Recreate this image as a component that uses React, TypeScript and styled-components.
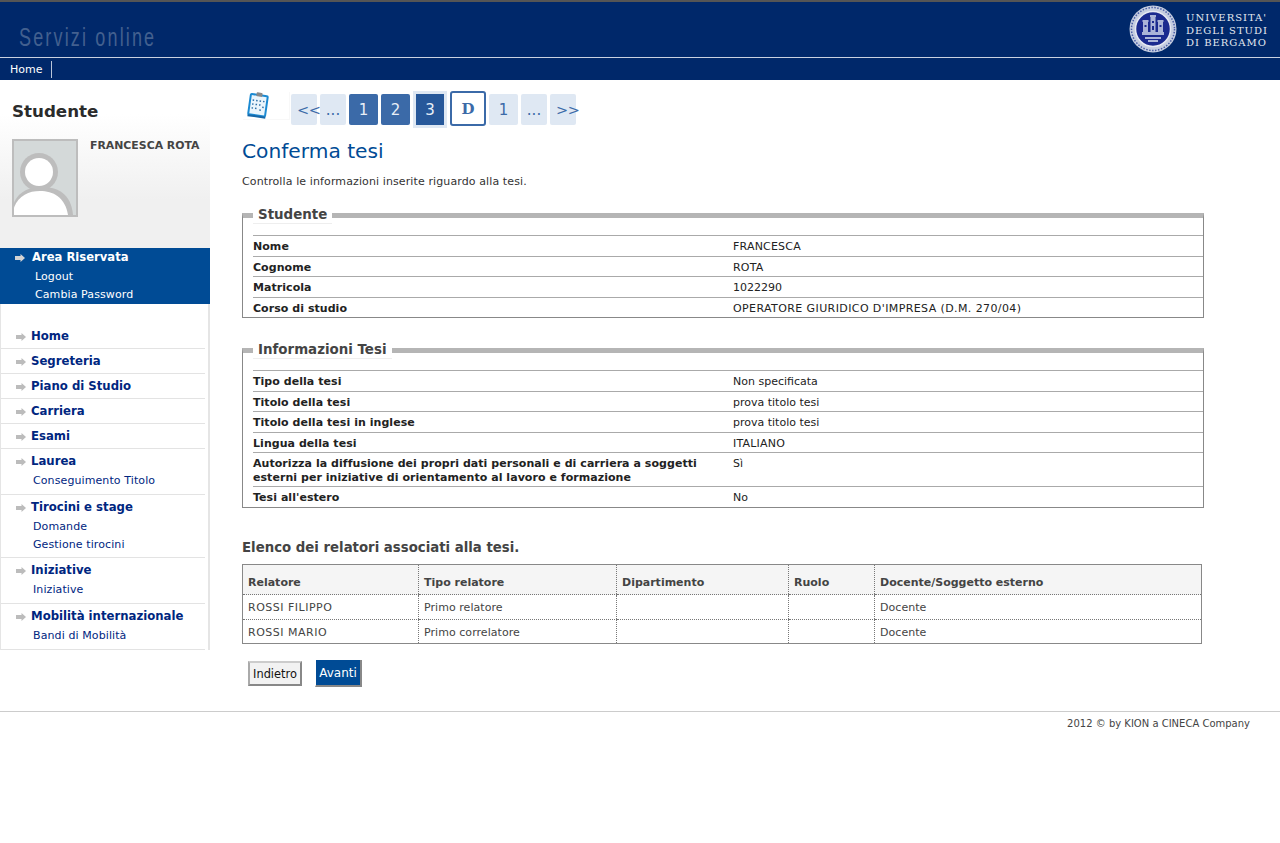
import React from "react";
import styled, { createGlobalStyle } from "styled-components";

const Global = createGlobalStyle`
  html, body { margin: 0; padding: 0; background: #fff; }
  body { font-family: "DejaVu Sans", Verdana, sans-serif; font-size: 11px; color: #222; }
`;
const Page = styled.div`width: 1280px; height: 843px; overflow: hidden; background: #fff;`;
const Header = styled.header`
  height: 57px; box-sizing: border-box; background: #00286a; border-top: 2px solid #555;
  display: flex; justify-content: space-between; align-items: flex-start;
`;
const Brand = styled.div`
  margin: 20px 0 0 19px; font-family: "Liberation Sans", sans-serif; transform: scaleX(.72); transform-origin: left center;
  font-size: 25px; line-height: 30px; letter-spacing: 3px; color: #43608f; white-space: nowrap;
`;
const Uni = styled.div`display: flex; align-items: flex-start; gap: 9px; margin: 3px 12px 0 0;`;
const UniText = styled.div`
  font-family: "DejaVu Serif", serif; font-size: 10px; line-height: 12.5px; letter-spacing: 1px; color: #e4e8f0; white-space: nowrap; margin-top: 7px;
`;
const Nav = styled.nav`
  height: 22px; background: #00286a; border-top: 1px solid #c9d1e0; display: flex; align-items: center;
`;
const NavItem = styled.a`
  color: #fff; font-size: 11px; height: 17px; line-height: 18px; padding: 0 9px 0 10px; border-right: 1px solid #b9c5d9;
`;
const Body = styled.div`display: grid; grid-template-columns: 210px 1fr; height: 631px; border-bottom: 1px solid #ccc;`;
const Side = styled.aside`width: 210px;`;
const Profile = styled.div`
  height: 168px; box-sizing: border-box; background: linear-gradient(#fff 0, #fff 34px, #f0f0f0 120px);
  padding: 20px 0 0 12px;
`;
const SideTitle = styled.h2`margin: 0 0 17px; font-size: 16.7px; line-height: 22px; font-weight: bold; color: #2b2b2b;`;
const ProfileRow = styled.div`display: flex; align-items: flex-start; gap: 12px;`;
const Avatar = styled.div`
  width: 66px; height: 78px; box-sizing: border-box; border: 2px solid #bdbdbd; background: #d4d9d9; overflow: hidden; display: flex;
`;
const StudentName = styled.div`font-size: 10.9px; line-height: 14px; font-weight: bold; color: #444; white-space: nowrap;`;
const Reserved = styled.div`background: #004b95; height: 56px; box-sizing: border-box;`;
const Arrow = styled.span<{ $light?: boolean }>`
  display: inline-block; width: 10px; height: 8px; margin: 0 6px 0 0; flex: none; background: ${(p) => (p.$light ? "#d3d3d3" : "#bcbcbc")};
  clip-path: polygon(0 25%, 55% 25%, 55% 0, 100% 50%, 55% 100%, 55% 75%, 0 75%);
`;
const ReservedTitle = styled.div`
  display: flex; align-items: center; padding-left: 15px; height: 17px; color: #fff; font-weight: bold; font-size: 11.6px; white-space: nowrap;
  ${Arrow} { margin-right: 7px; margin-top: 3px; }
`;
const ReservedLink = styled.a`
  display: block; color: #fff; padding-left: 35px; line-height: 18px; font-size: 11px; letter-spacing: .1px;
  &:first-of-type { margin-top: 3px; }
`;
const Menu = styled.div`
  box-sizing: border-box; height: 346px; padding-top: 20px; border-left: 1px solid #e5e5e5; border-right: 2px solid #e5e5e5;
`;
const Group = styled.div<{ $pad: number }>`
  border-bottom: 1px solid #e3e3e3; margin-right: 3px; padding-bottom: ${(p) => p.$pad}px;
`;
const GroupTitle = styled.a`
  display: flex; align-items: center; height: 24px; box-sizing: border-box; padding-left: 15px; color: #00267f; font-weight: bold; font-size: 11.7px; white-space: nowrap;
  ${Arrow} { margin-top: 2px; margin-right: 5px; }
`;
const SubLink = styled.a`
  display: block; color: #00267f; padding-left: 32px; font-size: 11px; line-height: 18px; letter-spacing: .1px;
  ${GroupTitle} + & { margin-top: -1px; }
`;
const Main = styled.main`padding: 11px 76px 0 32px;`;
const Steps = styled.div`display: flex; align-items: flex-start; height: 40px;`;
const StepIcon = styled.div`
  width: 47px; height: 28px; flex: none; padding-left: 4px; box-sizing: border-box; margin-right: 2px;
  box-shadow: 1px 1px 0 #f8f8f8;
`;
const StepList = styled.div`display: flex; gap: 3px; align-items: flex-start; margin-top: 3px;`;
const Step = styled.span<{ $w: number; $kind?: "done" | "now" | "d" | "edge" }>`
  display: flex; align-items: center; justify-content: center; box-sizing: border-box; border-radius: 2px;
  width: ${(p) => p.$w}px; height: 31px; font-size: 15px; white-space: nowrap;
  background: ${(p) => (p.$kind === "done" ? "#3b6aa8" : p.$kind === "now" ? "#27589a" : p.$kind === "d" ? "#fff" : "#dfe8f3")};
  color: ${(p) => (p.$kind === "done" || p.$kind === "now" ? "#e9eff7" : "#3b6aa8")};
  ${(p) => p.$kind === "edge" && "justify-content: flex-start; padding-left: 6px; letter-spacing: -.5px; font-size: 14.5px;"}
  ${(p) => p.$kind === "now" && "outline: 3px solid #dfe8f3; margin: 0 3px; border-radius: 0;"}
  ${(p) => p.$kind === "d" && `border: 2px solid #3b6aa8; border-radius: 3px; height: 35px; margin-top: -3px; font: bold 15px "DejaVu Serif", serif;`}
`;
const Title = styled.h1`margin: 7px 0 0; font-weight: normal; font-size: 20.2px; line-height: 26px; color: #004b95;`;
const Intro = styled.p`margin: 11px 0 0; font-size: 11px; line-height: 14px; color: #333; letter-spacing: .11px;`;
const Field = styled.fieldset<{ $h: number; $top: number }>`
  margin: ${(p) => p.$top}px 0 0; padding: 0 0 0 10px; height: ${(p) => p.$h}px; box-sizing: border-box; min-width: 0;
  border: 1px solid #888; border-top: 5px solid #b5b5b5; width: 962px;
`;
const Legend = styled.legend`
  margin-left: 0; padding: 0 5px 1px; font-size: 13.4px; line-height: 15px; font-weight: bold; color: #444; background: #fff; border-bottom: 1px solid #eee;
`;
const Row = styled.div<{ $h?: number }>`
  display: grid; grid-template-columns: 480px 1fr; border-top: 1px solid #aaa; align-items: start; padding-top: 4px; box-sizing: border-box;
  min-height: ${(p) => p.$h ?? 20.6}px; height: ${(p) => p.$h ?? 20.6}px; line-height: 14px;
`;
const RowsWrap = styled.div`padding-top: 11px;`;
const Label = styled.div`font-weight: bold; color: #222; width: 465px; letter-spacing: .05px;`;
const Val = styled.div<{ $track?: number }>`color: #222; letter-spacing: ${(p) => p.$track ?? 0}px;`;
const SubTitle = styled.h3`margin: 32px 0 0; font-size: 13.3px; line-height: 16px; font-weight: bold; color: #444;`;
const Table = styled.table`
  margin-top: 8px; width: 959px; height: 80px; border: 1px solid #888; border-collapse: collapse; table-layout: fixed; color: #444;
  tr:last-child td { height: 24px; padding-top: 1px; }
`;
const Th = styled.th<{ $w?: number }>`
  text-align: left; font-size: 11px; font-weight: bold; background: #f5f5f5; padding: 6px 5px 0; height: 30px; box-sizing: border-box;
  border-left: 1px dotted #777; border-bottom: 1px dotted #777; ${(p) => p.$w && `width: ${p.$w}px;`}
`;
const Td = styled.td<{ $caps?: boolean }>`
  font-size: 11px; padding: 0 5px; height: 25px; box-sizing: border-box; border-left: 1px dotted #777; border-bottom: 1px dotted #777;
  letter-spacing: ${(p) => (p.$caps ? ".5px" : ".05px")};
`;
const Buttons = styled.div`display: flex; align-items: flex-start; gap: 13px; margin: 17px 0 0 6px;`;
const Back = styled.button`
  width: 54px; height: 25px; padding: 0; box-sizing: border-box; background: #f2f2f2; border: 2px solid; border-color: #ccc #888 #888 #aaa; color: #111;
  font: 11.4px "DejaVu Sans", sans-serif;
`;
const Next = styled.button`
  width: 47px; height: 27px; margin-top: -1px; padding: 0; box-sizing: border-box; background: #004b95; border: solid; border-width: 0 2px 2px 1px; border-color: #fff #888 #888 #fff; color: #fff;
  font: 12px "DejaVu Sans", sans-serif;
`;
const Footer = styled.footer`
  text-align: right; padding: 5px 30px 0 0; font-size: 10px; line-height: 14px; color: #444;
`;

const Clip = () => (
  <svg width="24" height="28" viewBox="0 0 24 28">
    <g transform="rotate(8 12 14)">
      <rect x="3.5" y="4" width="17" height="20.5" rx="1" fill="#eaf5fc" stroke="#1b8ad2" strokeWidth="2" />
      <path d="M3 24.5 h18 v2 h-18z" fill="#1467a8" />
      <rect x="9" y="1.5" width="6" height="4" rx="1" fill="#888" />
      <g fill="#2b6ea6">
        <rect x="6" y="9" width="1.5" height="1.5" /><rect x="9.5" y="9" width="1.5" height="1.5" /><rect x="13" y="9" width="1.5" height="1.5" /><rect x="16.5" y="9" width="1.5" height="1.5" />
        <rect x="6" y="13" width="1.5" height="1.5" /><rect x="9.5" y="13" width="1.5" height="1.5" /><rect x="13" y="13" width="1.5" height="1.5" />
        <rect x="6" y="17" width="1.5" height="1.5" /><rect x="9.5" y="17" width="1.5" height="1.5" /><rect x="14" y="18" width="1.5" height="1.5" /><rect x="16.5" y="15" width="1.5" height="1.5" />
      </g>
    </g>
  </svg>
);
const Person = () => (
  <svg width="62" height="74" viewBox="0 0 62 74">
    <path d="M0 74 C2 52 16 46 31 46 C46 46 60 52 62 74 Z" fill="#bdbdbd" transform="translate(-3 0)" />
    <path d="M3 74 C6 56 18 50 31 50 C44 50 56 56 59 74 Z" fill="#fff" transform="translate(-5 0)" />
    <circle cx="25" cy="31" r="19" fill="#bdbdbd" />
    <circle cx="25" cy="31" r="14" fill="#fff" />
  </svg>
);
const Seal = () => (
  <svg width="48" height="48" viewBox="0 0 48 48">
    <circle cx="24" cy="24" r="23.5" fill="#c5cde0" />
    <circle cx="24" cy="24" r="21.5" fill="none" stroke="#4a5ea6" strokeWidth="1.5" strokeDasharray="1.5 1.5" />
    <circle cx="24" cy="24" r="17.5" fill="#1a2a8f" stroke="#e5e8f2" strokeWidth="1.5" />
    <g fill="#aab4d8">
      <rect x="14" y="17" width="5" height="13" /><rect x="21.5" y="12" width="5" height="18" /><rect x="29" y="17" width="5" height="13" />
      <rect x="13.5" y="15" width="6" height="2" /><rect x="21" y="10" width="6" height="2" /><rect x="28.5" y="15" width="6" height="2" />
      <rect x="13" y="27" width="22" height="3" /><rect x="16" y="32" width="16" height="2" /><rect x="19" y="35" width="10" height="2" />
    </g>
    <g fill="#1a2a8f"><rect x="15.5" y="20" width="2" height="2" /><rect x="23" y="16" width="2" height="2" /><rect x="30.5" y="20" width="2" height="2" /><rect x="23" y="21" width="2" height="4" /></g>
  </svg>
);

type Item = { t: string; subs?: string[] };
const menu: Item[] = [
  { t: "Home" }, { t: "Segreteria" }, { t: "Piano di Studio" }, { t: "Carriera" }, { t: "Esami" },
  { t: "Laurea", subs: ["Conseguimento Titolo"] },
  { t: "Tirocini e stage", subs: ["Domande", "Gestione tirocini"] },
  { t: "Iniziative", subs: ["Iniziative"] },
  { t: "Mobilità internazionale", subs: ["Bandi di Mobilità"] },
];
const student: [string, string, number?][] = [["Nome", "FRANCESCA", 0.2], ["Cognome", "ROTA", 0.2], ["Matricola", "1022290"], ["Corso di studio", "OPERATORE GIURIDICO D'IMPRESA (D.M. 270/04)", 0.4]];
const thesis: [string, string, number?][] = [
  ["Tipo della tesi", "Non specificata"], ["Titolo della tesi", "prova titolo tesi"], ["Titolo della tesi in inglese", "prova titolo tesi"],
  ["Lingua della tesi", "ITALIANO"],
  ["Autorizza la diffusione dei propri dati personali e di carriera a soggetti esterni per iniziative di orientamento al lavoro e formazione", "Sì", 34],
  ["Tesi all'estero", "No"],
];
const cols: [string, number][] = [["Relatore", 176], ["Tipo relatore", 198], ["Dipartimento", 172], ["Ruolo", 86], ["Docente/Soggetto esterno", 327]];
const rel = [["ROSSI FILIPPO", "Primo relatore", "", "", "Docente"], ["ROSSI MARIO", "Primo correlatore", "", "", "Docente"]];

export default function App() {
  return (
    <Page>
      <Global />
      <Header>
        <Brand>Servizi online</Brand>
        <Uni>
          <Seal />
          <UniText>UNIVERSITA'<br />DEGLI STUDI<br />DI BERGAMO</UniText>
        </Uni>
      </Header>
      <Nav><NavItem>Home</NavItem></Nav>
      <Body>
        <Side>
          <Profile>
            <SideTitle>Studente</SideTitle>
            <ProfileRow>
              <Avatar><Person /></Avatar>
              <StudentName>FRANCESCA ROTA</StudentName>
            </ProfileRow>
          </Profile>
          <Reserved>
            <ReservedTitle><Arrow $light />Area Riservata</ReservedTitle>
            <ReservedLink>Logout</ReservedLink>
            <ReservedLink>Cambia Password</ReservedLink>
          </Reserved>
          <Menu>
            {menu.map((m) => (
              <Group key={m.t} $pad={!m.subs ? 0 : m.subs.length === 2 ? 3 : 4}>
                <GroupTitle><Arrow />{m.t}</GroupTitle>
                {m.subs?.map((s) => <SubLink key={s}>{s}</SubLink>)}
              </Group>
            ))}
          </Menu>
        </Side>
        <Main>
          <Steps>
            <StepIcon><Clip /></StepIcon>
            <StepList>
              <Step $w={26} $kind="edge">&lt;&lt;</Step><Step $w={26}>...</Step>
              <Step $w={29} $kind="done">1</Step><Step $w={29} $kind="done">2</Step>
              <Step $w={28} $kind="now">3</Step>
              <Step $w={36} $kind="d">D</Step>
              <Step $w={29}>1</Step><Step $w={26}>...</Step><Step $w={26} $kind="edge">&gt;&gt;</Step>
            </StepList>
          </Steps>
          <Title>Conferma tesi</Title>
          <Intro>Controlla le informazioni inserite riguardo alla tesi.</Intro>
          <Field $h={111} $top={18}>
            <Legend>Studente</Legend>
            <RowsWrap>
              {student.map(([a, b, t]) => <Row key={a}><Label>{a}</Label><Val $track={t}>{b}</Val></Row>)}
            </RowsWrap>
          </Field>
          <Field $h={166} $top={24}>
            <Legend>Informazioni Tesi</Legend>
            <RowsWrap>
              {thesis.map(([a, b, h]) => <Row key={a} $h={h}><Label>{a}</Label><Val $track={b === "ITALIANO" ? 0.2 : 0}>{b}</Val></Row>)}
            </RowsWrap>
          </Field>
          <SubTitle>Elenco dei relatori associati alla tesi.</SubTitle>
          <Table>
            <thead><tr>{cols.map(([c, w]) => <Th key={c} $w={w}>{c}</Th>)}</tr></thead>
            <tbody>{rel.map((r) => <tr key={r[0]}>{r.map((c, i) => <Td key={i} $caps={i === 0}>{c}</Td>)}</tr>)}</tbody>
          </Table>
          <Buttons><Back>Indietro</Back><Next>Avanti</Next></Buttons>
        </Main>
      </Body>
      <Footer>2012 © by KION a CINECA Company</Footer>
    </Page>
  );
}
